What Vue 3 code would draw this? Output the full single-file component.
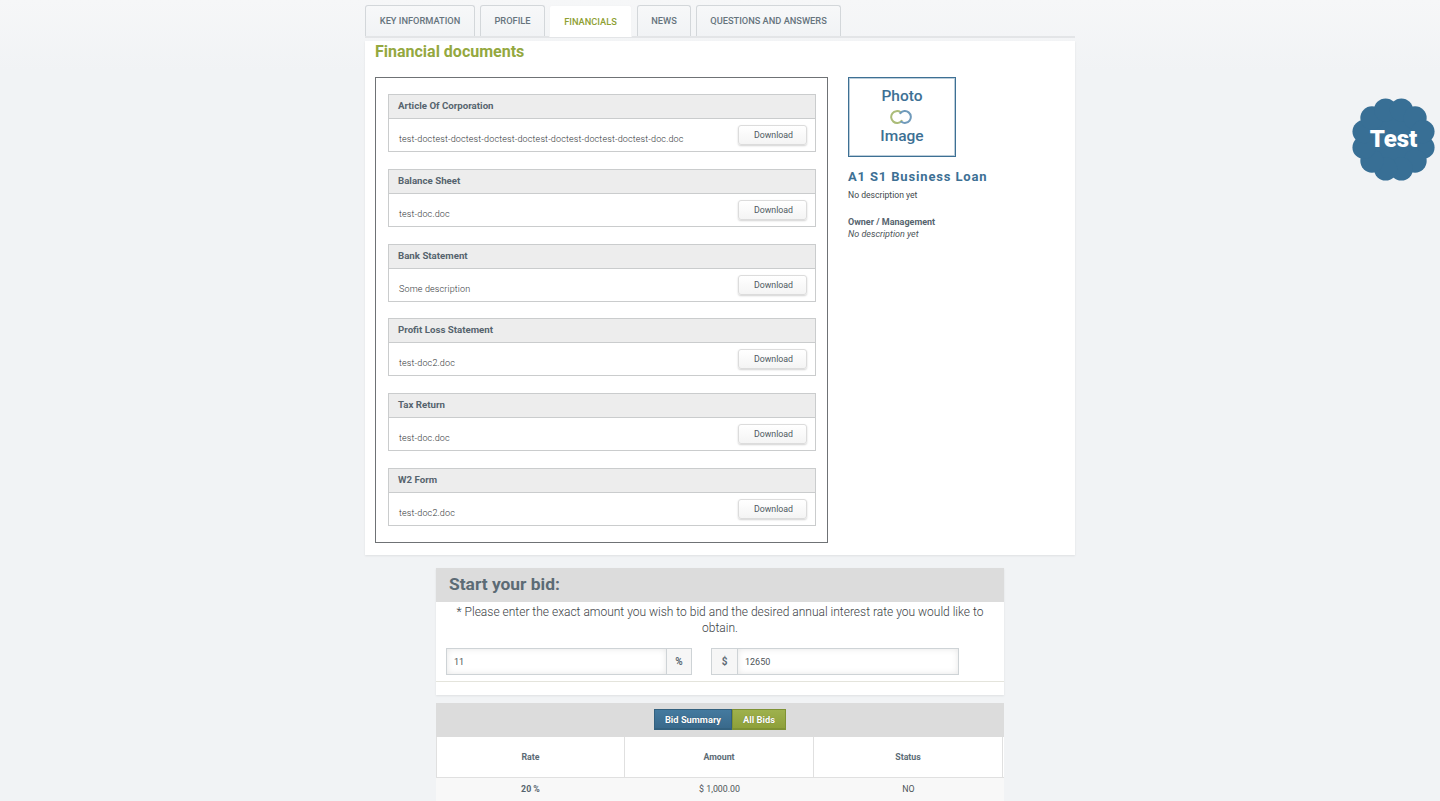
<script setup>
const tabs = [
  { label: 'KEY INFORMATION', active: false },
  { label: 'PROFILE', active: false },
  { label: 'FINANCIALS', active: true },
  { label: 'NEWS', active: false },
  { label: 'QUESTIONS AND ANSWERS', active: false },
]
const docs = [
  { title: 'Article Of Corporation', file: 'test-doctest-doctest-doctest-doctest-doctest-doctest-doctest-doc.doc' },
  { title: 'Balance Sheet', file: 'test-doc.doc' },
  { title: 'Bank Statement', file: 'Some description' },
  { title: 'Profit Loss Statement', file: 'test-doc2.doc' },
  { title: 'Tax Return', file: 'test-doc.doc' },
  { title: 'W2 Form', file: 'test-doc2.doc' },
]
const lobes = Array.from({ length: 12 }, (_, i) => {
  const a = (i * 30 + 15) * Math.PI / 180
  return { cx: 42.5 + 30.5 * Math.cos(a), cy: 42.5 + 30.5 * Math.sin(a) }
})
</script>

<template>
  <div class="page">
    <div class="container">
      <nav class="tabs">
        <div v-for="t in tabs" :key="t.label" class="tab" :class="{ active: t.active }">{{ t.label }}</div>
      </nav>
      <main class="card">
        <h2 class="title">Financial documents</h2>
        <div class="columns">
          <section class="docbox">
            <article v-for="d in docs" :key="d.title" class="panel">
              <header class="panel-head">{{ d.title }}</header>
              <div class="panel-body">
                <span class="file">{{ d.file }}</span>
                <button class="dl" type="button">Download</button>
              </div>
            </article>
          </section>
          <aside class="side">
            <div class="photo">
              <span>Photo</span>
              <svg class="rings" width="22" height="14" viewBox="0 0 22 14">
                <path d="M10.6 2.3A5.9 5.9 0 1 0 11.6 10.8" fill="none" stroke="#abbc78" stroke-width="2" stroke-linecap="round" />
                <path d="M11.4 11.7A5.9 5.9 0 1 0 10.4 3.2" fill="none" stroke="#6f9abb" stroke-width="2" stroke-linecap="round" />
              </svg>
              <span>Image</span>
            </div>
            <h3 class="loan">A1 S1 Business Loan</h3>
            <p class="desc">No description yet</p>
            <p class="owner">Owner / Management</p>
            <p class="owner-desc">No description yet</p>
          </aside>
        </div>
      </main>

      <section class="bid">
        <h3 class="bid-head">Start your bid:</h3>
        <p class="bid-note">* Please enter the exact amount you wish to bid and the desired annual interest rate you would like to obtain.</p>
        <div class="inputs">
          <div class="group rate">
            <div class="field">11</div>
            <div class="addon addon-right">%</div>
          </div>
          <div class="group amount">
            <div class="addon addon-left">$</div>
            <div class="field">12650</div>
          </div>
        </div>
      </section>

      <section class="summary">
        <div class="summary-head">
          <button class="sw blue" type="button">Bid Summary</button>
          <button class="sw green" type="button">All Bids</button>
        </div>
        <div class="row head-row">
          <div>Rate</div>
          <div>Amount</div>
          <div>Status</div>
        </div>
        <div class="row data-row">
          <div class="strong">20 %</div>
          <div>$ 1,000.00</div>
          <div>NO</div>
        </div>
      </section>
    </div>

    <div class="sticker">
      <svg width="85" height="85" viewBox="0 0 85 85">
        <circle cx="42.5" cy="42.5" r="33" fill="#386f95" />
        <circle v-for="(l, i) in lobes" :key="i" :cx="l.cx" :cy="l.cy" r="11.6" fill="#386f95" />
      </svg>
      <span class="sticker-text">Test</span>
    </div>
  </div>
</template>

<style>
html, body { margin: 0; height: 801px; overflow: hidden; background: #f1f3f5; }
</style>

<style scoped>
.page {
  position: relative;
  height: 801px;
  overflow: hidden;
  background: linear-gradient(#f6f7f8, #f1f3f5 70px) no-repeat, #f1f3f5;
  font-family: Roboto, "Liberation Sans", sans-serif;
  color: #5a6872;
}
.container {
  width: 710px;
  margin: 0 auto;
  padding-top: 5px;
  display: flex;
  flex-direction: column;
  align-items: center;
}
.tabs {
  align-self: stretch;
  display: flex;
  gap: 5px;
  height: 31px;
  border-bottom: 2px solid #e3e5e7;
}
.tab {
  box-sizing: border-box;
  height: 31px;
  text-align: center;
  white-space: nowrap;
  line-height: 29px;
  font-size: 9.25px;
  font-weight: 500;
  color: #66747d;
  background: linear-gradient(#f7f8f9, #f1f3f5);
  border: 1px solid #d3d7da;
  border-bottom: 0;
  border-radius: 3px 3px 0 0;
}
.tab:nth-child(1) { width: 110px; }
.tab:nth-child(2) { width: 65px; }
.tab:nth-child(3) { width: 83px; margin-left: -1px; }
.tab:nth-child(4) { width: 54px; }
.tab:nth-child(5) { width: 145px; }
.tab.active {
  background: #fff;
  border-color: #f4f5f6;
  color: #8ea032;
  line-height: 31px;
  height: 32px;
}
.card {
  align-self: stretch;
  box-sizing: border-box;
  height: 514px;
  margin-top: 3px;
  padding: 0 10px;
  background: #fff;
  box-shadow: 0 1px 2px rgba(0, 0, 0, 0.08);
}
.title {
  margin: 0;
  padding-top: 1px;
  height: 35px;
  line-height: 19px;
  font-size: 16px;
  font-weight: 700;
  color: #94a83f;
}
.columns { display: flex; gap: 20px; }
.docbox {
  box-sizing: border-box;
  width: 453px;
  height: 466px;
  padding: 16px 11px 0 12px;
  border: 1px solid #6f7275;
}
.panel {
  box-sizing: border-box;
  height: 58px;
  margin-bottom: 17px;
  border: 1px solid #cacccd;
}
.panel:nth-child(3) { margin-bottom: 16px; }
.panel-head {
  box-sizing: border-box;
  height: 24px;
  padding-left: 9px;
  line-height: 22px;
  font-size: 9.7px;
  font-weight: 700;
  color: #56646e;
  background: #ededed;
  border-bottom: 1px solid #cacccd;
}
.panel-body {
  height: 32px;
  display: flex;
  justify-content: space-between;
  align-items: flex-start;
  padding: 0 8px 0 10px;
}
.file {
  margin-top: 13px;
  font-size: 9px;
  line-height: 14px;
  font-weight: 300;
  color: #2f3437;
  letter-spacing: 0.14px;
}
.dl {
  box-sizing: border-box;
  width: 69px;
  height: 20px;
  margin-top: 6px;
  padding: 0 0 1px 2px;
  font: 400 8.8px Roboto, sans-serif;
  color: #4f5a62;
  background: linear-gradient(#fff, #f4f4f4);
  border: 1px solid #dcdcdc;
  border-radius: 3px;
  box-shadow: 0 1px 2px rgba(0, 0, 0, 0.18);
}
.side { display: flex; flex-direction: column; align-items: flex-start; }
.photo {
  box-sizing: border-box;
  width: 108px;
  height: 80px;
  border: 1px solid #3d7094;
  box-shadow: inset 0 0 0 1px rgba(61, 112, 148, 0.35);
  display: flex;
  flex-direction: column;
  align-items: center;
  padding-top: 9px;
  font-size: 15.5px;
  font-weight: 500;
  line-height: 19px;
  color: #3d7094;
}
.rings { margin: 4px 0 2.5px -2px; display: block; }
.loan {
  margin: 12px 0 0;
  font-size: 13px;
  line-height: 16px;
  font-weight: 700;
  letter-spacing: 0.85px;
  color: #3d7094;
}
.desc { margin: 4px 0 0; font-size: 8.6px; line-height: 13px; color: #41484d; }
.owner { margin: 14px 0 0; font-size: 9px; line-height: 12px; font-weight: 700; color: #56646e; }
.owner-desc { margin: 0; font-size: 9px; line-height: 12px; font-style: italic; color: #4e5559; }
.bid {
  box-sizing: border-box;
  width: 568px;
  height: 127px;
  margin-top: 13px;
  background: #fff;
  box-shadow: 0 1px 2px rgba(0, 0, 0, 0.08);
}
.bid-head {
  box-sizing: border-box;
  height: 34px;
  margin: 0;
  padding-left: 13px;
  line-height: 33px;
  font-size: 17.4px;
  font-weight: 700;
  color: #5c6b75;
  background: #dcdcdc;
}
.bid-note {
  margin: 2px 0 0;
  padding: 0 12px;
  text-align: center;
  font-size: 12px;
  line-height: 16px;
  font-weight: 300;
  color: #3b4145;
}
.inputs {
  display: flex;
  gap: 19px;
  height: 33px;
  margin-top: 12px;
  padding: 0 1px 0 10px;
  border-bottom: 1px solid #e4e4dc;
}
.group {
  box-sizing: border-box;
  display: flex;
  height: 27px;
  border: 1px solid #ced3d6;
  font-size: 9px;
}
.rate { width: 246px; }
.amount { width: 248px; }
.field {
  flex: 1;
  padding-left: 7px;
  line-height: 27px;
  color: #4e5559;
  background: #fff;
  box-shadow: inset 0 0 6px rgba(0, 0, 0, 0.1);
}
.addon {
  box-sizing: border-box;
  width: 25px;
  text-align: center;
  line-height: 26px;
  font-size: 10px;
  font-weight: 700;
  color: #5c6b75;
  background: #f6f6f6;
}
.addon-right { border-left: 1px solid #ced3d6; }
.addon-left { width: 26px; border-right: 1px solid #ced3d6; }
.summary {
  width: 568px;
  margin-top: 8px;
  background: #fff;
}
.summary-head {
  box-sizing: border-box;
  height: 34px;
  padding-top: 6px;
  display: flex;
  justify-content: center;
  background: #dcdcdc;
}
.sw {
  box-sizing: border-box;
  height: 21px;
  padding: 1px 0 0;
  border: 1px solid;
  border-bottom-width: 2px;
  font: 700 9.3px Roboto, sans-serif;
  color: #fff;
  text-shadow: 0 0 1px rgba(0, 0, 0, 0.35);
}
.blue { width: 78px; background: linear-gradient(#447a9f, #39698b); border-color: #33617f; }
.green { width: 54px; background: linear-gradient(#9eb14d, #8ea03a); border-color: #7f9234; }
.row {
  display: grid;
  grid-template-columns: 189px 189px 189px;
  text-align: center;
  font-size: 8.8px;
}
.head-row {
  height: 41px;
  line-height: 40px;
  font-weight: 700;
  color: #5c6b75;
  box-sizing: border-box;
  border-bottom: 1px solid #e0e0e0;
}
.head-row > div { border-right: 1px solid #e0e0e0; }
.head-row > div:first-child { border-left: 1px solid #e0e0e0; }
.data-row {
  box-sizing: border-box;
  height: 24px;
  line-height: 22px;
  background: #f8f8f8;
  color: #4e5559;
  border-bottom: 1px solid #dfe3c4;
}
.strong { font-weight: 700; color: #56646e; }
.sticker {
  position: absolute;
  left: 1351px;
  top: 97px;
  width: 85px;
  height: 85px;
}
.sticker svg { display: block; }
.sticker-text {
  position: absolute;
  inset: 0;
  text-align: center;
  line-height: 85px;
  font-size: 24px;
  font-weight: 900;
  color: #fff;
}
</style>
